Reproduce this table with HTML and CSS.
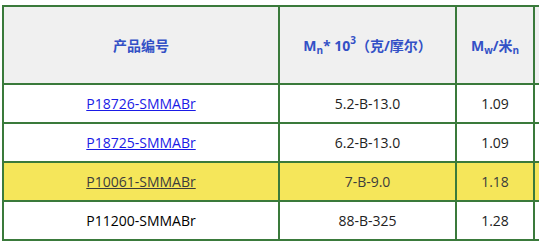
FILE: index.html
```html
<!DOCTYPE html>
<html lang="zh">
<head>
<meta charset="utf-8">
<link rel="stylesheet" href="styles.css">
</head>
<body>
<div class="wrap">
<table class="grid">
  <colgroup>
    <col class="c1"><col class="c2"><col class="c3"><col class="c4">
  </colgroup>
  <thead>
    <tr>
      <th>产品编号</th>
      <th>M<sub>n</sub>* 10<sup>3</sup>（克/摩尔）</th>
      <th>M<sub>w</sub>/米<sub>n</sub></th>
      <th></th>
    </tr>
  </thead>
  <tbody>
    <tr>
      <td><a href="#" class="link">P18726-SMMABr</a></td>
      <td>5.2-B-13.0</td>
      <td>1.09</td>
      <td></td>
    </tr>
    <tr>
      <td><a href="#" class="link">P18725-SMMABr</a></td>
      <td>6.2-B-13.0</td>
      <td>1.09</td>
      <td></td>
    </tr>
    <tr class="hl">
      <td><a href="#" class="link visited">P10061-SMMABr</a></td>
      <td>7-B-9.0</td>
      <td>1.18</td>
      <td></td>
    </tr>
    <tr>
      <td class="plain">P11200-SMMABr</td>
      <td>88-B-325</td>
      <td>1.28</td>
      <td></td>
    </tr>
  </tbody>
</table>
</div>
</body>
</html>
```
FILE: styles.css
```css
html, body {
  margin: 0;
  padding: 0;
  background: #ffffff;
  overflow: hidden;
}
.wrap {
  padding: 5px 0 0 2px;
  width: 537px;
  overflow: hidden;
}
.grid {
  border-collapse: separate;
  border-spacing: 0;
  table-layout: fixed;
  width: 654px;
  border-top: 2px solid #3a7a3b;
  border-left: 2px solid #3a7a3b;
  font-family: "Open Sans", "Noto Sans CJK SC", sans-serif;
  font-size: 14px;
  color: #222;
}
.c1 { width: 276px; }
.c2 { width: 177px; }
.c3 { width: 78px; }
.c4 { width: 121px; }
.grid th, .grid td {
  box-sizing: border-box;
  border-right: 2px solid #3a7a3b;
  border-bottom: 2px solid #3a7a3b;
  text-align: center;
  vertical-align: middle;
  padding: 0 4px;
  white-space: nowrap;
}
.grid th {
  height: 78px;
  background: #f0f0f0;
  color: #3350c6;
  font-weight: 700;
  font-size: 14px;
}
.grid td {
  height: 39px;
}
.grid sub {
  font-size: 10px;
  vertical-align: -3px;
  line-height: 0;
}
.grid sup {
  font-size: 10px;
  vertical-align: 7px;
  line-height: 0;
}
.hl td {
  background: #f5e65a;
  color: #3c3c3c;
}
.link {
  color: #1a1ae6;
  text-decoration: underline;
}
.link.visited {
  color: #3c3c3c;
}
.plain {
  color: #000;
}
```
